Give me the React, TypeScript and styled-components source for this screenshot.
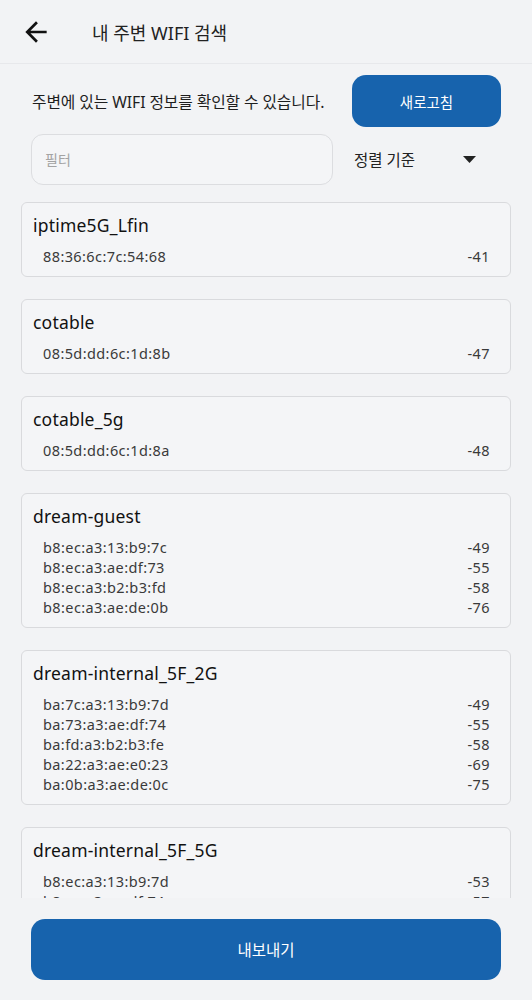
import React from 'react'
import styled, { createGlobalStyle } from 'styled-components'

type Ap = { mac: string; rssi: number }
type Network = { ssid: string; aps: Ap[] }

const networks: Network[] = [
	{ ssid: 'iptime5G_Lfin', aps: [{ mac: '88:36:6c:7c:54:68', rssi: -41 }] },
	{ ssid: 'cotable', aps: [{ mac: '08:5d:dd:6c:1d:8b', rssi: -47 }] },
	{ ssid: 'cotable_5g', aps: [{ mac: '08:5d:dd:6c:1d:8a', rssi: -48 }] },
	{
		ssid: 'dream-guest',
		aps: [
			{ mac: 'b8:ec:a3:13:b9:7c', rssi: -49 },
			{ mac: 'b8:ec:a3:ae:df:73', rssi: -55 },
			{ mac: 'b8:ec:a3:b2:b3:fd', rssi: -58 },
			{ mac: 'b8:ec:a3:ae:de:0b', rssi: -76 },
		],
	},
	{
		ssid: 'dream-internal_5F_2G',
		aps: [
			{ mac: 'ba:7c:a3:13:b9:7d', rssi: -49 },
			{ mac: 'ba:73:a3:ae:df:74', rssi: -55 },
			{ mac: 'ba:fd:a3:b2:b3:fe', rssi: -58 },
			{ mac: 'ba:22:a3:ae:e0:23', rssi: -69 },
			{ mac: 'ba:0b:a3:ae:de:0c', rssi: -75 },
		],
	},
	{
		ssid: 'dream-internal_5F_5G',
		aps: [
			{ mac: 'b8:ec:a3:13:b9:7d', rssi: -53 },
			{ mac: 'b8:ec:a3:ae:df:74', rssi: -57 },
			{ mac: 'b8:ec:a3:b2:b3:fe', rssi: -60 },
			{ mac: 'b8:ec:a3:ae:de:0c', rssi: -77 },
		],
	},
]

const GlobalStyle = createGlobalStyle`
	* { box-sizing: border-box; }
	html, body {
		margin: 0;
		padding: 0;
		background: #f2f3f5;
	}
	body {
		font-family: 'Noto Sans', 'Noto Sans CJK KR', sans-serif;
		color: #1e1e1e;
	}
`

const Page = styled.div`
	height: 100vh;
	display: flex;
	flex-direction: column;
	background: #f2f3f5;
`
const Header = styled.header`
	height: 64px;
	flex: 0 0 64px;
	display: flex;
	align-items: center;
	padding-left: 20px;
	border-bottom: 1px solid #e7e8eb;
`
const BackButton = styled.button`
	border: none;
	background: none;
	padding: 0;
	display: flex;
	align-items: center;
	color: #111;
	cursor: pointer;
`
const HeaderTitle = styled.h1`
	margin: 0 0 0 40px;
	font-size: 18px;
	font-weight: 400;
	color: #222;
`
const Controls = styled.div`
	padding: 11px 31px 0 31px;
	display: flex;
	flex-direction: column;
	gap: 7px;
`
const Row = styled.div`
	display: flex;
	align-items: center;
	justify-content: space-between;
`
const Description = styled.p`
	margin: 0 0 0 1px;
	font-size: 15.8px;
	letter-spacing: -0.1px;
	color: #1e1e1e;
`
const PrimaryButton = styled.button<{ $wide?: boolean }>`
	border: none;
	background: #1763ad;
	color: #fff;
	font-family: inherit;
	font-size: ${p => (p.$wide ? '15.5px' : '14.5px')};
	border-radius: 14px;
	width: ${p => (p.$wide ? '100%' : '149px')};
	height: ${p => (p.$wide ? '61px' : '52px')};
	cursor: pointer;
`
const FilterInput = styled.input`
	width: 302px;
	height: 51px;
	border: 1px solid #dcdde0;
	border-radius: 12px;
	background: #f4f5f7;
	padding: 0 13px;
	font-family: inherit;
	font-size: 14px;
	outline: none;
	&::placeholder { color: #a3a3a3; }
`
const SortSelect = styled.div`
	flex: 1;
	margin-left: 21px;
	display: flex;
	align-items: center;
	justify-content: space-between;
	padding-right: 25px;
	font-size: 15.5px;
	color: #222;
`
const List = styled.div`
	flex: 1;
	margin-top: 17px;
	padding: 0 21px;
	overflow: hidden;
	display: flex;
	flex-direction: column;
	gap: 22px;
`
const Card = styled.section`
	flex: 0 0 auto;
	border: 1px solid #d9dadd;
	border-radius: 6px;
	background: #f4f5f7;
	padding: 10px 20px 10px 11px;
`
const Ssid = styled.div`
	font-size: 17.5px;
	letter-spacing: 0.2px;
	line-height: 24px;
	color: #111;
`
const ApList = styled.div`
	margin-top: 9px;
	padding-left: 10px;
`
const ApRow = styled.div`
	display: flex;
	justify-content: space-between;
	font-size: 14.5px;
	letter-spacing: 0.4px;
	line-height: 20px;
	color: #3a3a3a;
`
const Footer = styled.footer`
	flex: 0 0 auto;
	padding: 21px 31px 20px;
`

const App = () => {
	return (
		<Page>
			<GlobalStyle />
			<Header>
				<BackButton aria-label="back">
					<svg width="32" height="32" viewBox="0 0 24 24">
						<path fill="currentColor" d="M20 11H7.83l5.59-5.59L12 4l-8 8 8 8 1.41-1.41L7.83 13H20v-2z" />
					</svg>
				</BackButton>
				<HeaderTitle>내 주변 WIFI 검색</HeaderTitle>
			</Header>
			<Controls>
				<Row>
					<Description>주변에 있는 WIFI 정보를 확인할 수 있습니다.</Description>
					<PrimaryButton>새로고침</PrimaryButton>
				</Row>
				<Row>
					<FilterInput placeholder="필터" />
					<SortSelect>
						<span>정렬 기준</span>
						<svg width="13" height="7" viewBox="0 0 13 7">
							<polygon points="0,0 13,0 6.5,7" fill="#222" />
						</svg>
					</SortSelect>
				</Row>
			</Controls>
			<List>
				{networks.map(n => (
					<Card key={n.ssid}>
						<Ssid>{n.ssid}</Ssid>
						<ApList>
							{n.aps.map(ap => (
								<ApRow key={ap.mac}>
									<span>{ap.mac}</span>
									<span>{ap.rssi}</span>
								</ApRow>
							))}
						</ApList>
					</Card>
				))}
			</List>
			<Footer>
				<PrimaryButton $wide>내보내기</PrimaryButton>
			</Footer>
		</Page>
	)
}

export default App
